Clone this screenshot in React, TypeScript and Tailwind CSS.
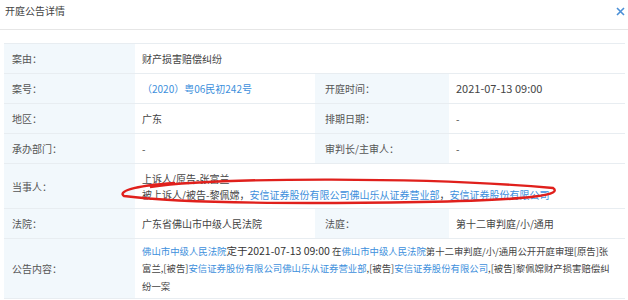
import React from "react";

const B = ({ children }: { children: React.ReactNode }) => (
  <span className="text-[#3d8fdc]">{children}</span>
);

const Label = ({ children, className = "" }: { children: React.ReactNode; className?: string }) => (
  <div className={"flex items-center bg-[#f2f8fc] text-[#555] border-b border-[#e8edf1] " + className}>
    {children}
  </div>
);

const Val = ({ children, className = "" }: { children: React.ReactNode; className?: string }) => (
  <div className={"flex items-center bg-white text-[#444] border-b border-[#e8edf1] " + className}>
    {children}
  </div>
);

export default function App() {
  return (
    <div
      className="w-[628px] h-[300px] bg-white overflow-hidden relative text-[10px]"
      style={{ fontFamily: '"Noto Sans CJK SC", "Noto Sans", sans-serif' }}
    >
      <div className="h-[30px] flex items-start justify-between border-b border-[#e6e6e6] pl-[5px] pr-[3px] pt-[3px]">
        <span className="text-[#444] text-[10px]">开庭公告详情</span>
        <svg width="9" height="9" viewBox="0 0 9 9" className="mt-[4px]">
          <path d="M1 1 L8 8 M8 1 L1 8" stroke="#4a8fd6" strokeWidth="1.6" />
        </svg>
      </div>
      <div className="ml-[4px] mt-[13px] w-[621px] grid grid-cols-[131px_180px_134px_176px] border-t border-r border-[#e8edf1]">
        <Label className="h-[30px] pl-[8px]">案由：</Label>
        <Val className="h-[30px] pl-[7px] col-span-3">财产损害赔偿纠纷</Val>

        <Label className="h-[30px] pl-[8px]">案号：</Label>
        <Val className="h-[30px] pl-[7px]"><B>（2020）粤06民初242号</B></Val>
        <Label className="h-[30px] pl-[10px]">开庭时间：</Label>
        <Val className="h-[30px] pl-[7px] text-[11px]">2021-07-13 09:00</Val>

        <Label className="h-[30px] pl-[8px]">地区：</Label>
        <Val className="h-[30px] pl-[7px]">广东</Val>
        <Label className="h-[30px] pl-[10px]">排期日期：</Label>
        <Val className="h-[30px] pl-[7px]">-</Val>

        <Label className="h-[30px] pl-[8px]">承办部门：</Label>
        <Val className="h-[30px] pl-[7px]">-</Val>
        <Label className="h-[30px] pl-[10px]">审判长/主审人：</Label>
        <Val className="h-[30px] pl-[7px]">-</Val>

        <Label className="h-[45px] pl-[8px]">当事人：</Label>
        <Val className="h-[45px] pl-[7px] col-span-3">
          <div className="leading-[16px] whitespace-nowrap pt-[2px]">
            <div>上诉人/原告-张富兰</div>
            <div>
              被上诉人/被告-黎佩嫦，<B>安信证券股份有限公司佛山乐从证券营业部</B>，<B>安信证券股份有限公司</B>
            </div>
          </div>
        </Val>

        <Label className="h-[30px] pl-[8px]">法院：</Label>
        <Val className="h-[30px] pl-[7px]">广东省佛山市中级人民法院</Val>
        <Label className="h-[30px] pl-[10px]">法庭：</Label>
        <Val className="h-[30px] pl-[7px]">第十二审判庭/小/通用</Val>

        <Label className="h-[60px] pl-[8px]">公告内容：</Label>
        <Val className="h-[60px] pl-[7px] col-span-3">
          <div className="leading-[17.5px] whitespace-nowrap text-[9.4px]">
            <div>
              <B>佛山市中级人民法院</B>
              <span className="text-[#333] text-[10.5px]">定于2021-07-13 09:00</span> 在<B>佛山市中级人民法院</B>第十二审判庭/小/通用公开开庭审理[原告]张
            </div>
            <div>
              富兰,[被告]<B>安信证券股份有限公司佛山乐从证券营业部</B>,[被告]<B>安信证券股份有限公司</B>,[被告]黎佩嫦财产损害赔偿纠
            </div>
            <div>纷一案</div>
          </div>
        </Val>
      </div>
      <svg
        className="absolute left-0 top-0 pointer-events-none"
        width="628"
        height="300"
        viewBox="0 0 628 300"
      >
        <path
          d="M 150 187 C 220 177, 430 177, 553 188 C 562 194, 540 200, 420 202 C 300 204, 180 203, 124 196 C 118 192, 130 186, 175 183"
          fill="none"
          stroke="#e0201c"
          strokeWidth="2.4"
        />
      </svg>
    </div>
  );
}
